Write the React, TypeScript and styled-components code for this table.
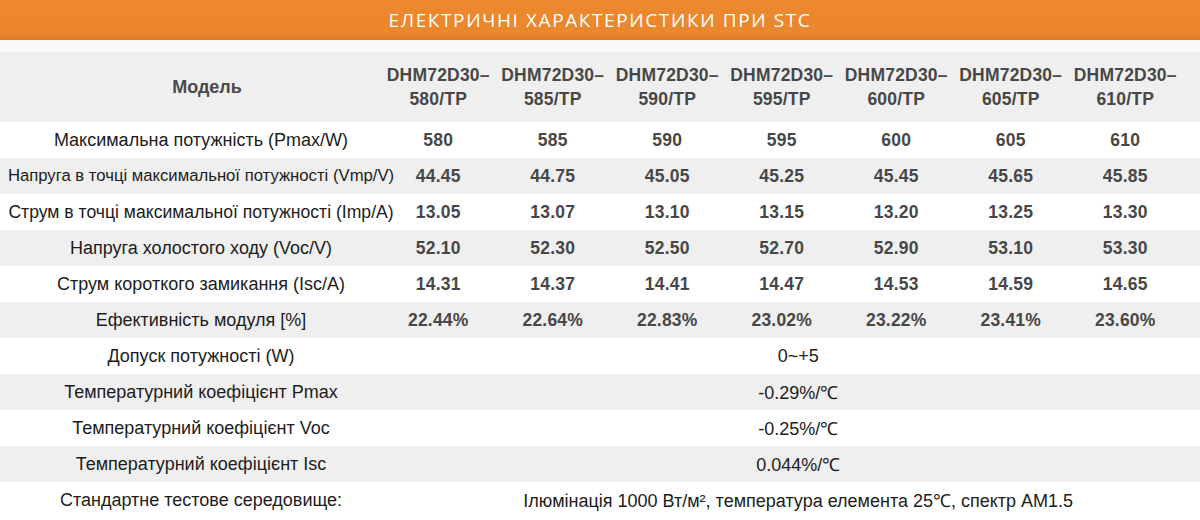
import React from "react";
import styled, { createGlobalStyle } from "styled-components";

const Global = createGlobalStyle`
  html, body { margin: 0; padding: 0; background: #ffffff; }
  body { font-family: "Liberation Sans", Arial, sans-serif; }
`;

const Page = styled.div`
  width: 1200px;
  height: 520px;
  overflow: hidden;
  background: #ffffff;
  display: flex;
  flex-direction: column;
`;

const Banner = styled.div`
  height: 40px;
  flex: 0 0 40px;
  background: linear-gradient(#ec892e 0%, #ea862b 85%, #dc7925 100%);
  display: flex;
  align-items: center;
  justify-content: center;
`;

const Title = styled.h1`
  margin: 0;
  font-family: "Open Sans", "Noto Sans", sans-serif;
  font-weight: 400;
  font-size: 19px;
  letter-spacing: 1.6px;
  color: #ffffff;
`;

const Spacer = styled.div`
  height: 12px;
  flex: 0 0 12px;
  background: #fafafa;
`;

const Row = styled.div<{ $shade: boolean; $h: number }>`
  display: grid;
  grid-template-columns: 381px repeat(7, 114.5px) 1fr;
  height: ${(p) => p.$h}px;
  flex: 0 0 ${(p) => p.$h}px;
  background: ${(p) => (p.$shade ? "#efefef" : "#ffffff")};
  align-items: center;
`;

const Label = styled.div<{ $head?: boolean; $size?: number }>`
  display: flex;
  justify-content: center;
  padding-left: ${(p) => (p.$head ? "33px" : "21px")};
  white-space: nowrap;
  font-size: ${(p) => p.$size ?? 18}px;
  font-weight: ${(p) => (p.$head ? 700 : 400)};
  color: ${(p) => (p.$head ? "#4a4a4a" : "#1c1c1c")};
`;

const Cell = styled.div<{ $head?: boolean }>`
  text-align: center;
  white-space: nowrap;
  font-size: 17.5px;
  font-weight: 700;
  line-height: ${(p) => (p.$head ? "24px" : "20px")};
  color: #474747;
  letter-spacing: 0.2px;
`;

const Span = styled.div`
  grid-column: 2 / 9;
  padding-left: 33px;
  text-align: center;
  white-space: nowrap;
  font-size: 18px;
  font-weight: 400;
  color: #1c1c1c;
`;

const models = ["580", "585", "590", "595", "600", "605", "610"];

const dataRows: { label: string; size?: number; values: string[] }[] = [
  { label: "Максимальна потужність (Pmax/W)", values: ["580", "585", "590", "595", "600", "605", "610"] },
  { label: "Напруга в точці максимальної потужності (Vmp/V)", size: 16.7, values: ["44.45", "44.75", "45.05", "45.25", "45.45", "45.65", "45.85"] },
  { label: "Струм в точці максимальної потужності (Imp/A)", size: 17.6, values: ["13.05", "13.07", "13.10", "13.15", "13.20", "13.25", "13.30"] },
  { label: "Напруга холостого ходу (Voc/V)", values: ["52.10", "52.30", "52.50", "52.70", "52.90", "53.10", "53.30"] },
  { label: "Струм короткого замикання (Isc/A)", values: ["14.31", "14.37", "14.41", "14.47", "14.53", "14.59", "14.65"] },
  { label: "Ефективність модуля [%]", values: ["22.44%", "22.64%", "22.83%", "23.02%", "23.22%", "23.41%", "23.60%"] },
];

const spanRows: { label: string; value: string }[] = [
  { label: "Допуск потужності (W)", value: "0~+5" },
  { label: "Температурний коефіцієнт Pmax", value: "-0.29%/℃" },
  { label: "Температурний коефіцієнт Voc", value: "-0.25%/℃" },
  { label: "Температурний коефіцієнт Isc", value: "0.044%/℃" },
  { label: "Стандартне тестове середовище:", value: "Ілюмінація 1000 Вт/м², температура елемента 25℃, спектр AM1.5" },
];

export default function App() {
  return (
    <Page>
      <Global />
      <Banner>
        <Title>ЕЛЕКТРИЧНІ ХАРАКТЕРИСТИКИ ПРИ STC</Title>
      </Banner>
      <Spacer />
      <Row $shade $h={70}>
        <Label $head>Модель</Label>
        {models.map((m) => (
          <Cell $head key={m}>
            DHM72D30–
            <br />
            {m}/TP
          </Cell>
        ))}
      </Row>
      {dataRows.map((r, i) => (
        <Row key={r.label} $shade={i % 2 === 1} $h={36}>
          <Label $size={r.size}>{r.label}</Label>
          {r.values.map((v, j) => (
            <Cell key={j}>{v}</Cell>
          ))}
        </Row>
      ))}
      {spanRows.map((r, i) => (
        <Row key={r.label} $shade={(i + dataRows.length) % 2 === 1} $h={36}>
          <Label>{r.label}</Label>
          <Span>{r.value}</Span>
        </Row>
      ))}
    </Page>
  );
}
